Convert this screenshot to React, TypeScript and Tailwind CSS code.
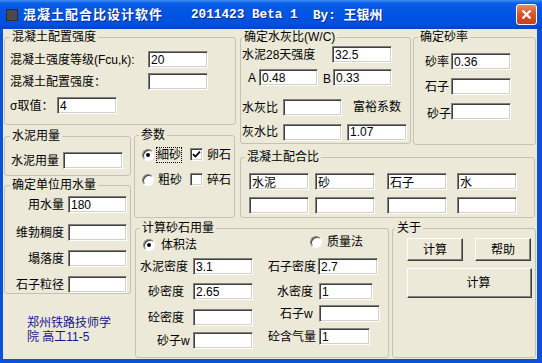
import React from 'react';

const sunken =
  'border border-t-[#808080] border-l-[#808080] border-r-white border-b-white shadow-[inset_1px_1px_0_#404040,inset_-1px_-1px_0_#d4d0c8]';

interface FieldProps {
  value?: string;
  w?: string;
  className?: string;
}

const Field: React.FC<FieldProps> = ({ value = '', w = 'w-[60px]', className = '' }) => (
  <input
    readOnly
    value={value}
    className={`h-[17px] ${w} shrink-0 bg-white px-[2px] text-[12px] leading-[13px] text-black outline-none ${sunken} ${className}`}
  />
);

interface GroupProps {
  title: string;
  legend?: string;
  className: string;
  children: React.ReactNode;
}

const Group: React.FC<GroupProps> = ({ title, legend = 'ml-[4px]', className, children }) => (
  <fieldset className={`rounded-[3px] border border-[#c5c2b2] ${className}`}>
    <legend className={`${legend} px-[2px] text-[12px] leading-[14px]`}>{title}</legend>
    {children}
  </fieldset>
);

const Radio: React.FC<{ checked?: boolean }> = ({ checked }) => (
  <span className="flex h-[12px] w-[12px] shrink-0 items-center justify-center rounded-full border border-t-[#808080] border-l-[#808080] border-r-white border-b-white bg-white shadow-[inset_1px_1px_0_#404040]">
    {checked && <span className="h-[4px] w-[4px] rounded-full bg-black" />}
  </span>
);

const Check: React.FC<{ checked?: boolean }> = ({ checked }) => (
  <span className={`flex h-[13px] w-[13px] shrink-0 items-center justify-center bg-white ${sunken}`}>
    {checked && (
      <svg width="9" height="9" viewBox="0 0 9 9">
        <path d="M1 4.2 L3.4 6.6 L8 1.6" stroke="black" strokeWidth="1.7" fill="none" />
      </svg>
    )}
  </span>
);

const Btn: React.FC<{ label: string; className: string }> = ({ label, className }) => (
  <button
    className={`flex items-center justify-center border border-t-white border-l-white border-r-[#404040] border-b-[#404040] bg-[#ece9d8] text-[12px] shadow-[inset_-1px_-1px_0_#808080] ${className}`}
  >
    {label}
  </button>
);

export default function App() {
  return (
    <div className="flex h-[363px] w-[542px] flex-col overflow-hidden font-['Liberation_Sans','Noto_Sans_CJK_SC',sans-serif] text-[12px] leading-[14px] text-black">
      {/* title bar */}
      <div className="flex h-[29px] shrink-0 items-center bg-[linear-gradient(180deg,#3d8df5_0%,#0a5ce6_12%,#0054e3_50%,#0050dc_85%,#0843c4_100%)] pl-[6px] pr-[5px] text-white">
        <span className="h-[12px] w-[12px] border border-[#2c2c2c] bg-[#4a4a4a]" />
        <span className="ml-[5px] w-[168px] text-[13px] font-bold tracking-[1px] [text-shadow:1px_1px_0_#0b2a8a]">
          混凝土配合比设计软件
        </span>
        <span className="w-[122px] font-['Liberation_Mono','Noto_Sans_CJK_SC',monospace] text-[12.7px] font-bold [text-shadow:1px_1px_0_#0b2a8a]">
          2011423 Beta 1
        </span>
        <span className="font-['Liberation_Mono','Noto_Sans_CJK_SC',monospace] text-[12.7px] font-bold [text-shadow:1px_1px_0_#0b2a8a]">
          By: <span className="font-['Noto_Sans_CJK_SC',sans-serif] text-[13px]">王银州</span>
        </span>
        <span className="ml-auto flex h-[21px] w-[21px] items-center justify-center rounded-[3px] border border-white bg-[linear-gradient(180deg,#e98a68_0%,#d9572f_45%,#c8401a_100%)]">
          <svg width="11" height="11" viewBox="0 0 11 11">
            <path d="M1.5 1.5 L9.5 9.5 M9.5 1.5 L1.5 9.5" stroke="white" strokeWidth="2.2" />
          </svg>
        </span>
      </div>

      <div className="flex flex-1">
        <div className="w-[3px] bg-[#0b52d8]" />
        <div className="grid w-[534px] grid-cols-[130px_105px_152px_21px_126px] grid-rows-[98px_93px_139px] bg-[#ece9d8]">
          {/* 混凝土配置强度 */}
          <Group
            title="混凝土配置强度"
            legend="ml-[5px]"
            className="col-span-2 col-start-1 row-start-1 ml-[1px] mt-[1px] h-[95px] w-[232px]"
          >
            <div className="pl-[5px]">
              <div className="mt-[7px] flex items-center">
                <span className="w-[138px]">混凝土强度等级(Fcu,k):</span>
                <Field value="20" />
              </div>
              <div className="mt-[5px] flex items-center">
                <span className="w-[138px]">混凝土配置强度：</span>
                <Field />
              </div>
              <div className="mt-[7px] flex items-center">
                <span className="w-[47px]">σ取值：</span>
                <Field value="4" />
              </div>
            </div>
          </Group>

          {/* 确定水灰比 */}
          <Group
            title="确定水灰比(W/C)"
            legend="ml-[1px]"
            className="col-span-2 col-start-3 row-span-2 row-start-1 ml-[2px] mt-[1px] h-[114px] w-[171px]"
          >
            <div className="pl-[1px]">
              <div className="mt-[2px] flex items-center">
                <span className="w-[90px]">水泥28天强度</span>
                <Field value="32.5" />
              </div>
              <div className="mt-[6px] flex items-center">
                <span className="w-[17px] pl-[6px]">A</span>
                <Field value="0.48" w="w-[59px]" />
                <span className="ml-[5px] w-[10px] pt-[3px]">B</span>
                <Field value="0.33" w="w-[59px]" />
              </div>
              <div className="mt-[13px] flex items-center">
                <span className="w-[41px]">水灰比</span>
                <Field w="w-[59px]" />
                <span className="-mt-[2px] ml-[11px]">富裕系数</span>
              </div>
              <div className="mt-[7px] flex items-center">
                <span className="w-[41px]">灰水比</span>
                <Field w="w-[59px]" className="mt-[1px]" />
                <Field value="1.07" className="ml-[5px]" />
              </div>
            </div>
          </Group>

          {/* 确定砂率 */}
          <Group
            title="确定砂率"
            className="col-start-5 row-span-2 row-start-1 ml-[2px] mt-[1px] h-[115px] w-[123px]"
          >
            <div className="pl-[11px]">
              <div className="mt-[9px] flex items-center">
                <span className="w-[26px]">砂率</span>
                <Field value="0.36" />
              </div>
              <div className="mt-[8px] flex items-center">
                <span className="w-[26px]">石子</span>
                <Field />
              </div>
              <div className="mt-[7px] flex items-center">
                <span className="w-[26px] pl-[2px] pt-[5px]">砂子</span>
                <Field />
              </div>
            </div>
          </Group>

          {/* left column */}
          <div className="col-start-1 row-span-2 row-start-2 flex flex-col pl-[1px]">
            <Group title="水泥用量" legend="ml-[5px]" className="mt-[2px] h-[47px] w-[127px]">
              <div className="mt-[9px] flex items-center pl-[6px]">
                <span className="w-[52px]">水泥用量</span>
                <Field />
              </div>
            </Group>
            <Group title="确定单位用水量" legend="ml-[5px]" className="mt-[2px] h-[116px] w-[127px]">
              <div className="mt-[4px] flex items-center">
                <span className="w-[63px] pr-[4px] text-right">用水量</span>
                <Field value="180" w="w-[59px]" />
              </div>
              <div className="mt-[11px] flex items-center">
                <span className="w-[63px] pr-[4px] text-right">维勃稠度</span>
                <Field w="w-[59px]" />
              </div>
              <div className="mt-[9px] flex items-center">
                <span className="w-[63px] pr-[4px] text-right">塌落度</span>
                <Field w="w-[59px]" />
              </div>
              <div className="mt-[9px] flex items-center">
                <span className="w-[63px] pr-[4px] text-right">石子粒径</span>
                <Field w="w-[59px]" />
              </div>
            </Group>
            <div className="mt-[22px] pl-[23px] text-[#16168a]">
              郑州铁路技师学
              <br />
              院 高工11-5
            </div>
          </div>

          {/* 参数 */}
          <Group title="参数" className="col-start-2 row-start-2 ml-[1px] mt-[1px] h-[90px] w-[101px]">
            <div className="pl-[7px]">
              <div className="mt-[4px] flex h-[17px] items-center">
                <div className="flex w-[48px] items-center">
                  <Radio checked />
                  <span className="ml-[2px] border border-dotted border-black px-0">細砂</span>
                </div>
                <Check checked />
                <span className="ml-[4px]">卵石</span>
              </div>
              <div className="mt-[8px] flex h-[17px] items-center">
                <div className="flex w-[48px] items-center">
                  <Radio />
                  <span className="ml-[3px] px-[1px]">粗砂</span>
                </div>
                <Check />
                <span className="ml-[4px]">碎石</span>
              </div>
            </div>
          </Group>

          {/* 混凝土配合比 */}
          <Group
            title="混凝土配合比"
            className="col-span-3 col-start-3 row-start-2 ml-[2px] mt-[23px] h-[68px] w-[295px]"
          >
            <div className="pl-[8px]">
              <div className="mt-[9px] flex">
                <Field value="水泥" />
                <Field value="砂" className="ml-[6px]" />
                <Field value="石子" className="ml-[12px]" />
                <Field value="水" className="ml-[10px]" />
              </div>
              <div className="mt-[7px] flex">
                <Field />
                <Field className="ml-[6px]" />
                <Field className="ml-[12px]" />
                <Field className="ml-[10px]" />
              </div>
            </div>
          </Group>

          {/* 计算砂石用量 */}
          <Group
            title="计算砂石用量"
            className="col-span-2 col-start-2 row-start-3 ml-[2px] mt-[1px] h-[137px] w-[254px]"
          >
            <div className="flex h-[20px] items-start">
              <div className="mt-[3px] flex w-[174px] items-center pl-[7px]">
                <Radio checked />
                <span className="ml-[6px]">体积法</span>
              </div>
              <div className="flex items-center">
                <Radio />
                <span className="ml-[5px]">质量法</span>
              </div>
            </div>
            <div className="mt-[3px] flex items-start">
              <div className="flex items-center">
                <span className="w-[57px] pl-[4px]">水泥密度</span>
                <Field value="3.1" />
              </div>
              <div className="flex items-center">
                <span className="w-[65px] pl-[15px]">石子密度</span>
                <Field value="2.7" />
              </div>
            </div>
            <div className="mt-[8px] flex items-start">
              <div className="flex items-center">
                <span className="w-[57px] pl-[12px]">砂密度</span>
                <Field value="2.65" />
              </div>
              <div className="flex items-center">
                <span className="w-[66px] pl-[24px]">水密度</span>
                <Field value="1" w="w-[54px]" />
              </div>
            </div>
            <div className="mt-[5px] flex items-start">
              <div className="mt-[4px] flex items-center">
                <span className="w-[57px] pl-[12px]">砼密度</span>
                <Field />
              </div>
              <div className="flex items-center">
                <span className="w-[66px] pl-[27px]">石子w</span>
                <Field w="w-[61px]" />
              </div>
            </div>
            <div className="mt-[2px] flex items-start">
              <div className="mt-[4px] flex items-center">
                <span className="w-[57px] pl-[21px]">砂子w</span>
                <Field />
              </div>
              <div className="flex items-center">
                <span className="w-[66px] pl-[15px]">砼含气量</span>
                <Field value="1" w="w-[51px]" />
              </div>
            </div>
          </Group>

          {/* 关于 */}
          <Group
            title="关于"
            legend="ml-[2px]"
            className="col-span-2 col-start-4 row-start-3 ml-[2px] mt-[1px] h-[137px] w-[144px]"
          >
            <div className="pl-[14px]">
              <div className="mt-[3px] flex">
                <Btn label="计算" className="h-[23px] w-[56px]" />
                <Btn label="帮助" className="ml-[12px] h-[23px] w-[56px]" />
              </div>
              <Btn label="计算" className="mt-[7px] h-[30px] w-[125px] pl-[18px]" />
            </div>
          </Group>
        </div>
        <div className="w-[5px] bg-[#0b52d8]" />
      </div>
      <div className="h-[4px] shrink-0 bg-[#0b52d8]" />
    </div>
  );
}
